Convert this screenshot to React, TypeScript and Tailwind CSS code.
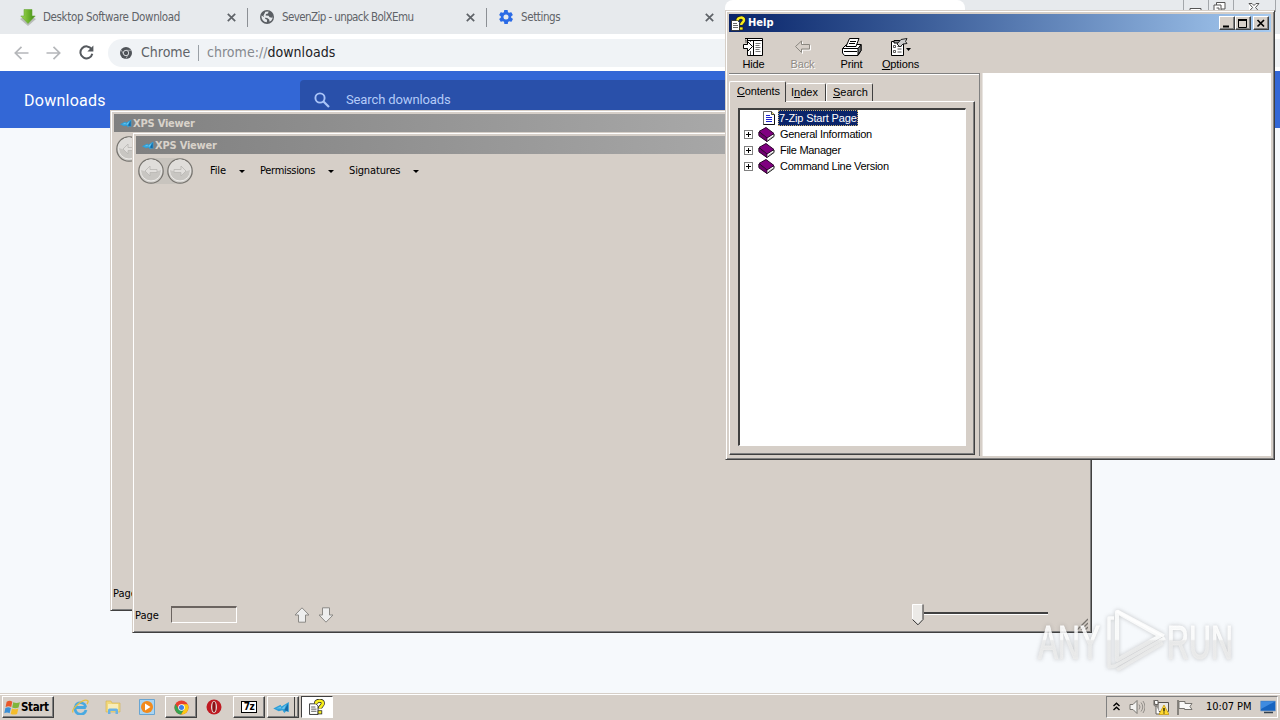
import React from "react";
import clsx from "clsx";

const TAHOMA = "font-['DejaVu_Sans_Condensed','DejaVu_Sans',sans-serif]";
const MS_SANS = "font-['Liberation_Sans',sans-serif]";

const RAISED =
  "border border-t-white border-l-white border-r-[#404040] border-b-[#404040] shadow-[inset_-1px_-1px_0_#808080]";

/* ---------- icons ---------- */

const CloseGlyph = ({ className }: { className?: string }) => (
  <svg viewBox="0 0 9 9" className={clsx("h-[9px] w-[9px] shrink-0", className)}>
    <path d="M.8.8l7.4 7.4M8.2.8L.8 8.2" stroke="#5f6368" strokeWidth="1.7" />
  </svg>
);

const DownloadIcon = () => (
  <svg viewBox="0 0 16 17" className="h-[17px] w-4 shrink-0">
    <defs>
      <linearGradient id="dl" x1="0" y1="0" x2="1" y2="0">
        <stop offset="0" stopColor="#a3d65a" />
        <stop offset="0.5" stopColor="#6fb52c" />
        <stop offset="1" stopColor="#3f8a17" />
      </linearGradient>
    </defs>
    <path d="M0 10l8 7 8-7-2-1H2z" fill="#b9bcb9" />
    <path d="M4 .5h8V7h3.2L8 14.5.8 7H4z" fill="url(#dl)" stroke="#6aa83a" strokeWidth=".6" />
  </svg>
);

const GlobeIcon = () => (
  <svg viewBox="0 0 14 14" className="h-[14px] w-[14px] shrink-0">
    <circle cx="7" cy="7" r="7" fill="#5a5e63" />
    <path
      d="M1.6 5.4l3 2.1.9 1.6 1.6.6-.3 2.6A5.6 5.6 0 011.5 6zM5.4 1.8l3.2-.4-.6 2-2 .6-.4 1.4 3 .3 1 1.6 2.6.5.2-2 .2 2.4-1.2 2.2-1.8 1.4-.4-2.4-2-1.4-2.8-.6-1-1.6z"
      fill="#e7eaed"
    />
  </svg>
);

const GearIcon = () => (
  <svg viewBox="2 2 20 20" className="h-[14px] w-[14px] shrink-0">
    <path
      fill="#2b6be6"
      fillRule="evenodd"
      d="M19.4 13c0-.3.1-.6.1-1s0-.7-.1-1l2.1-1.6c.2-.2.3-.4.1-.7l-2-3.4c-.1-.2-.4-.3-.6-.2l-2.5 1c-.5-.4-1.1-.7-1.7-1l-.4-2.6c0-.3-.2-.5-.5-.5h-4c-.2 0-.5.2-.5.4l-.4 2.7c-.6.2-1.1.6-1.7 1L5 5.1c-.2-.1-.5 0-.6.2l-2 3.4c-.1.3-.1.5.1.7L4.6 11c0 .3-.1.7-.1 1s0 .7.1 1l-2.1 1.6c-.2.2-.3.4-.1.7l2 3.4c.1.2.4.3.6.2l2.5-1c.5.4 1.1.7 1.7 1l.4 2.6c0 .3.3.5.5.5h4c.2 0 .5-.2.5-.4l.4-2.7c.6-.2 1.2-.6 1.7-1l2.5 1c.2.1.5 0 .6-.2l2-3.4c.1-.2.1-.5-.1-.7zM12 15.6a3.6 3.6 0 110-7.2 3.6 3.6 0 010 7.2z"
    />
  </svg>
);

const ArrowGlyph = ({ flip }: { flip?: boolean }) => (
  <svg viewBox="0 0 15 14" className={clsx("h-[14px] w-[15px]", flip && "-scale-x-100")}>
    <path d="M14.5 7H1.5M7.5.8L1.3 7l6.2 6.2" fill="none" stroke="#b5b7ba" strokeWidth="1.7" />
  </svg>
);

const ReloadIcon = () => (
  <svg viewBox="0 0 15 15" className="h-[15px] w-[15px]">
    <path d="M12.6 4.3A6 6 0 1013.3 8.7" fill="none" stroke="#55595e" strokeWidth="2" />
    <path d="M14.4.5v6H8.4z" fill="#55595e" />
  </svg>
);

const ChromeMono = () => (
  <svg viewBox="0 0 12 12" className="h-3 w-3">
    <circle cx="6" cy="6" r="6" fill="#505459" />
    <circle cx="6" cy="6" r="2.7" fill="#505459" stroke="#e4e7ea" strokeWidth=".9" />
    <path d="M6 3.3h5.2M3.7 7.4L1.2 3M8.3 7.4L5.8 11.8" stroke="#c4c7ca" strokeWidth=".7" />
  </svg>
);

const ChromeColor = () => (
  <svg viewBox="0 0 16 16" className="h-[15px] w-[15px]">
    <circle cx="8" cy="8" r="7.5" fill="#e7402f" />
    <path d="M1.5 4.3A7.5 7.5 0 007.6 15.5l3.3-5.700H5.2z" fill="#36a350" />
    <path d="M7.600 15.500A7.500 7.500 0 0014.500 4.500H8l2.900 5.300z" fill="#fbc913" />
    <circle cx="8" cy="8" r="3.5" fill="#fff" />
    <circle cx="8" cy="8" r="2.7" fill="#3f7fe8" />
  </svg>
);

const XpsIcon = ({ className }: { className?: string }) => (
  <svg viewBox="0 0 18 12" className={className}>
    <path d="M0 7l8-4 1 2L17 0v11l-3-1-2 2-2-3-4 1z" fill="#2f9fd8" />
    <path d="M3 7l5-2 1 2 5-4-2 5-3-1z" fill="#6cc6ee" />
    <path d="M12 9l4-7v8z" fill="#146aa8" />
  </svg>
);

const HelpIcon = ({ className }: { className?: string }) => (
  <svg viewBox="0 0 15 15" className={className}>
    <path d="M.5 4.5h6l2 2v8h-8z" fill="#fff" stroke="#222" strokeWidth=".8" />
    <path d="M2 7.500h4M2 9.500h5M2 11.500h5" stroke="#444" strokeWidth=".8" />
    <path d="M6.500 4.500C6.500 1 13 .5 13 4c0 2.500-2.800 2.500-2.800 5" fill="none" stroke="#222" strokeWidth="3.8" />
    <path d="M6.500 4.500C6.500 1 13 .5 13 4c0 2.500-2.800 2.500-2.800 5" fill="none" stroke="#f7ee1c" strokeWidth="2.5" />
    <rect x="8.5" y="11" width="3.500" height="3" fill="#f7ee1c" stroke="#222" strokeWidth=".7" />
  </svg>
);

const HideIcon = () => (
  <svg viewBox="0 0 20 18" className="mr-[1px] h-[18px] w-5">
    <path d="M4.500 .5h15v17h-15z" fill="#fff" stroke="#000" />
    <path d="M2 .5h3M4 2.500h15.500M10.500 2v15" stroke="#000" />
    <path d="M2 2h1v3M7.500 3v1M7.500 13v4" fill="none" stroke="#555" />
    <path d="M12.500 5.500h5M12.500 7.500h4M12.500 9.500h5M12.500 11.500h4M12.500 13.500h5" stroke="#777" />
    <path d="M.5 6.500h4v-3l5 5-5 5v-3h-4z" fill="#fff" stroke="#000" />
  </svg>
);

const BackIcon = () => (
  <svg viewBox="0 0 18 14" className="h-[14px] w-[18px]">
    <path d="M2.500 7.500l6-5.500v3.500h8v4.500h-8v3.500z" fill="none" stroke="#fff" />
    <path d="M1.500 6.500l6-5.500v3.500h8v4.500h-8v3.500z" fill="#d6cfc8" stroke="#8a8780" />
  </svg>
);

const PrintIcon = () => (
  <svg viewBox="0 0 20 18" className="h-[18px] w-5">
    <path d="M.5 10.500l4-4h14.500v6l-3 5H2.500l-2-2.500z" fill="#fff" stroke="#000" />
    <path d="M16 17v-6.500l3-4v6z" fill="#777" stroke="#000" />
    <path d="M4 8.500L7.500.5H17L14 8.500z" fill="#fff" stroke="#000" />
    <path d="M8 3.500h6M7 5.500h6M.5 10.500h15.500M2 13.500h13" stroke="#000" />
  </svg>
);

const OptionsIcon = () => (
  <svg viewBox="0 0 20 18" className="h-[18px] w-5">
    <path d="M.5 3.500h12v14H.5z" fill="#fff" stroke="#000" />
    <path d="M3 2.500h6v2.500H3z" fill="#999" stroke="#000" />
    <path d="M2.500 7.500h2v2h-2zM2.500 12.500h2v2h-2z" fill="#fff" stroke="#333" strokeWidth=".8" />
    <path d="M6.500 8.500h4M6.500 11h4M6.500 14h4" stroke="#555" />
    <path d="M6 6l4-4.500 6-1-1.500 3 1.500 2-4 .5-3 3z" fill="#ccc" stroke="#222" />
    <path d="M15 10h5l-2.500 3z" fill="#000" />
  </svg>
);

const PageIcon = () => (
  <svg viewBox="0 0 12 14" className="h-[14px] w-3 shrink-0">
    <path d="M.5.5h8l3 3v10H.5z" fill="#fff" stroke="#666" />
    <path d="M11.500 3.500v10H.5" fill="none" stroke="#111" />
    <path d="M8.500.5v3h3" fill="#e8e070" stroke="#444" />
    <path d="M3 4.500h4M3 6.500h6M3 8.500h6M3 10.500h6" stroke="#1c23d0" />
  </svg>
);

const BookIcon = () => (
  <svg viewBox="0 0 17 15" className="h-[15px] w-[17px] shrink-0">
    <path d="M1 5v3.500l8 6 7-5V7z" fill="#fff" stroke="#111" />
    <path d="M1 4.500L8 .5l8 6-7 4.500z" fill="#800080" stroke="#2a002a" />
    <path d="M1 5v4l8 5.500V11z" fill="#700070" stroke="#2a002a" strokeWidth=".7" />
    <path d="M10.500 12.500l5-3.300" stroke="#777" strokeWidth=".7" />
  </svg>
);

/* ---------- chrome ---------- */

type TabProps = { icon: React.ReactNode; title: string; className: string; textClass: string };

const BrowserTab = ({ icon, title, className, textClass }: TabProps) => (
  <div className={clsx("flex h-[34px] items-center pr-[11px]", className)}>
    {icon}
    <span className={clsx("mt-[1px] flex-1 whitespace-nowrap text-[#5f6368]", textClass)}>{title}</span>
    <CloseGlyph />
  </div>
);

const Browser = () => (
  <div className="flex h-[693px] w-full flex-col bg-[#f6f9fc]">
    <div className={clsx("flex h-[34px] shrink-0 bg-[#e7eaed] text-[11.5px]", TAHOMA)}>
      <BrowserTab icon={<DownloadIcon />} title="Desktop Software Download" className="w-[247px] pl-5" textClass="ml-[7px] tracking-[-0.37px]" />
      <div className="mt-2 h-[19px] w-px bg-[#8c9095]" />
      <BrowserTab icon={<GlobeIcon />} title="SevenZip - unpack BolXEmu" className="w-[238px] pl-3" textClass="ml-2 tracking-[-0.6px]" />
      <div className="mt-2 h-[19px] w-px bg-[#8c9095]" />
      <BrowserTab icon={<GearIcon />} title="Settings" className="w-[238px] pl-3" textClass="ml-2 tracking-[-0.4px]" />
      <div className="h-[34px] w-[240px] rounded-t-lg bg-white" />
      <div className="flex flex-1 justify-end">
        <svg viewBox="0 0 98 12" className="h-3 w-[98px]">
          <path d="M1.500 0v12M26.500 0v12M51.500 0v12M93.500 0v12" stroke="#a3a7ab" />
          <path d="M8 12V8.500h11V12M32 12V5h7v7M34.500 5V2.500H43V9H39M34.500 8h2.500v3" fill="#fff" stroke="#555" />
          <path d="M67 3.500h3l2 2 2-2h3l-3.500 4 3.500 4M67 3.500l3.500 4-3.500 4" fill="#fff" stroke="#555" />
        </svg>
      </div>
    </div>
    <div className="flex h-[37px] shrink-0 items-center bg-white pl-[14px]">
      <ArrowGlyph />
      <div className="ml-[17px]">
        <ArrowGlyph flip />
      </div>
      <div className="ml-[18px]">
        <ReloadIcon />
      </div>
      <div className={clsx("ml-[14px] flex h-7 flex-1 items-center rounded-l-full bg-[#f0f3f6] pl-3 text-[14px] text-[#5f6368]", TAHOMA)}>
        <ChromeMono />
        <span className="ml-[9px] w-[49px] whitespace-nowrap">Chrome</span>
        <div className="ml-2 h-4 w-px bg-[#9aa0a6]" />
        <span className="ml-2 whitespace-nowrap tracking-[0.03px] text-[#85898e]">
          chrome://<span className="text-[#202124]">downloads</span>
        </span>
      </div>
    </div>
    <div className="flex h-[57px] shrink-0 items-start bg-[#3367d6] font-['Roboto',sans-serif]">
      <span className="mt-[18px] w-[276px] pl-6 text-[16px] leading-6 tracking-[0.25px] text-white">Downloads</span>
      <div className="ml-[24px] mt-[9px] flex h-10 w-[680px] items-center rounded-sm bg-[#2950aa] pl-[14px]">
        <svg viewBox="0 0 16 16" className="h-4 w-4">
          <circle cx="6" cy="6" r="4.6" fill="none" stroke="#a9c4f8" strokeWidth="1.9" />
          <path d="M9.500 9.500l5.500 5.500" stroke="#a9c4f8" strokeWidth="2.2" />
        </svg>
        <span className="ml-4 text-[13px] tracking-[-0.12px] text-[#b4cbf8]">Search downloads</span>
      </div>
    </div>
  </div>
);

/* ---------- XPS Viewer ---------- */

const NavCircle = ({ flip }: { flip?: boolean }) => (
  <svg viewBox="0 0 26 26" className={clsx("h-[26px] w-[26px] shrink-0", flip && "-scale-x-100")}>
    <circle cx="13" cy="13" r="12.2" fill="#d2d0cc" stroke="#77746f" strokeWidth="1.2" />
    <circle cx="13" cy="12.5" r="10.500" fill="#c8c6c2" stroke="#edebe8" />
    <path d="M2.500 12a10.500 10.500 0 0121 0q-10 4-21 0z" fill="#dfddda" />
    <path d="M7 13l5-5v3.500h7v3h-7V18z" fill="#e1dfdc" stroke="#b8b6b2" strokeWidth=".8" />
  </svg>
);

const menus = [
  { label: "File", width: "w-[29px]", tracking: "tracking-[-0.15px]" },
  { label: "Permissions", width: "w-[68px]", tracking: "tracking-[-0.3px]" },
  { label: "Signatures", width: "w-[64px]", tracking: "tracking-[-0.15px]" },
];

const PageArrow = ({ down }: { down?: boolean }) => (
  <svg viewBox="0 0 16 16" className={clsx("h-4 w-4", down && "rotate-180")}>
    <path d="M8 .8l7 7.200h-3.500v7.200h-7V8H1z" fill="#eeeeee" stroke="#8b8985" />
  </svg>
);

const XpsViewer = ({ className }: { className: string }) => (
  <div
    className={clsx(
      "absolute flex h-[501px] w-[960px] flex-col border border-[#d6cfc8] border-r-[#404040] border-b-[#404040] bg-[#d6cfc8] p-[3px] pl-0 pt-0 text-[11px] text-black",
      "shadow-[inset_1px_1px_0_#fff,inset_-1px_-1px_0_#808080]",
      TAHOMA,
      className
    )}
  >
    <div className="ml-[3px] mt-[3px] flex h-[18px] shrink-0 items-center bg-linear-to-r from-[#808080] to-[#c0c0c0] pl-[6px]">
      <XpsIcon className="h-[9px] w-3" />
      <span className="ml-[1px] mt-[2px] text-[11px] font-bold tracking-[-0.2px] text-[#d8d2ca]">XPS Viewer</span>
    </div>
    <div className="mt-[1px] flex h-8 shrink-0 items-center pl-[5px]">
      <div className="flex gap-[3px] rounded-full bg-[#c8c4be]">
        <NavCircle />
        <NavCircle flip />
      </div>
      <div className="ml-[17px] flex gap-[15px]">
        {menus.map((menu) => (
          <div key={menu.label} className="flex items-center">
            <span className={clsx("whitespace-nowrap", menu.tracking, menu.width)}>{menu.label}</span>
            <svg viewBox="0 0 6 3" className="h-[3px] w-[6px]">
              <path d="M0 0h6L3 3z" />
            </svg>
          </div>
        ))}
      </div>
    </div>
    <div className="flex-1" />
    <div className="flex h-7 shrink-0 items-center pl-[2px]">
      <span className="mt-[2px] w-9">Page</span>
      <div className="mb-[1px] h-[17px] w-[66px] border border-t-2 border-[#6b6460] border-r-white border-b-white" />
      <div className="mb-[1px] ml-[57px] flex gap-2">
        <PageArrow />
        <PageArrow down />
      </div>
      <div className="ml-auto flex items-center">
        <svg viewBox="0 0 12 22" className="h-[22px] w-3">
          <path d="M.5.5h10.500v15L6 21 .5 15.500z" fill="#eceae7" />
          <path d="M.5 15.500V.5h10" fill="none" stroke="#fff" />
          <path d="M11 .5v15L6 20.800.5 15.500" fill="none" stroke="#333" />
        </svg>
        <div className="mb-[3px] h-[3px] w-[124px] border-b border-b-white bg-[#404040]" />
      </div>
      <svg viewBox="0 0 12 12" className="ml-[28px] mt-[18px] h-3 w-3">
        <path d="M1 12L12 1M5 12l7-7M9 12l3-3" stroke="#77736e" strokeWidth="1.3" />
      </svg>
    </div>
  </div>
);

/* ---------- Help ---------- */

const CaptionButton = ({ children, className }: { children: React.ReactNode; className?: string }) => (
  <div className={clsx("flex h-[14px] w-4 items-center justify-center bg-[#d6cfc8]", RAISED, className)}>
    <svg viewBox="0 0 10 9" className="h-[9px] w-[10px]">
      {children}
    </svg>
  </div>
);

const toolButtons = [
  { key: "", label: "Hide", icon: <HideIcon /> },
  { key: "", label: "Back", icon: <BackIcon />, disabled: true },
  { key: "", label: "Print", icon: <PrintIcon /> },
  { key: "O", label: "ptions", icon: <OptionsIcon /> },
];

const topics = ["General Information", "File Manager", "Command Line Version"];

const HelpWindow = () => (
  <div
    className={clsx(
      "absolute left-[725px] top-[10px] flex h-[450px] w-[550px] flex-col border border-[#d6cfc8] border-r-[#404040] border-b-[#404040] bg-[#d6cfc8] p-[3px] text-[11px] text-black shadow-[inset_1px_1px_0_#fff,inset_-1px_-1px_0_#808080]",
      MS_SANS
    )}
  >
    <div className="flex h-[18px] shrink-0 items-center bg-linear-to-r from-[#0a246a] to-[#a6caf0] pl-[2px] pr-[2px]">
      <HelpIcon className="h-[15px] w-[15px]" />
      <span className={clsx("ml-[2px] mt-[1px] flex-1 font-bold text-white", TAHOMA)}>Help</span>
      <CaptionButton>
        <path d="M1 7.500h6" stroke="#000" strokeWidth="2" />
      </CaptionButton>
      <CaptionButton>
        <path d="M.5 0v8.500h8V0" fill="none" stroke="#000" />
        <path d="M0 1h9" stroke="#000" strokeWidth="2" />
      </CaptionButton>
      <CaptionButton className="ml-[2px]">
        <path d="M1.500 1l6.500 6.500M8 1L1.500 7.500" stroke="#000" strokeWidth="1.7" />
      </CaptionButton>
    </div>
    <div className="flex h-[41px] shrink-0">
      {toolButtons.map((tool) => (
        <div
          key={tool.label}
          className={clsx("flex w-[49px] flex-col items-center pt-[5px]", tool.disabled && "text-[#8f8b85] [text-shadow:1px_1px_0_#fff]")}
        >
          <div className="flex h-5 items-center">{tool.icon}</div>
          <span className="leading-[14px] tracking-[-0.1px]">
            {tool.key && <u>{tool.key}</u>}
            {tool.label}
          </span>
        </div>
      ))}
    </div>
    <div className="flex min-h-0 flex-1">
      <div className="flex w-[250px] flex-col border-t border-t-[#808080] pb-[1px] pr-1 shadow-[inset_0_1px_0_#fff]">
        <div className="mt-[7px] flex h-5 items-end">
          <div className="relative z-10 mb-[-1px] flex h-[21px] w-[57px] items-start rounded-t-[2px] border border-b-0 border-white border-r-[#404040] bg-[#d6cfc8] pl-[7px] pt-[3px] leading-[13px]">
            <span className="tracking-[-0.15px]"><u>C</u>ontents</span>
          </div>
          <div className="flex h-[18px] w-[40px] items-center rounded-t-[2px] border border-b-0 border-l-0 border-white border-r-[#404040] pl-[5px]">
            <span><u className="no-underline">I</u><u>n</u>dex</span>
          </div>
          <div className="flex h-[18px] w-[47px] items-center rounded-t-[2px] border border-b-0 border-white border-r-[#404040] pl-[6px]">
            <span><u>S</u>earch</span>
          </div>
        </div>
        <div className="flex flex-1 border border-white border-r-[#404040] border-b-[#404040] px-2 pb-2 pt-[6px] shadow-[inset_-1px_-1px_0_#808080]">
          <div className="flex flex-1 flex-col border border-t-2 border-l-2 border-t-[#404040] border-l-[#404040] border-r-white border-b-white bg-white">
            <div className="flex h-4 items-center pl-[23px]">
              <PageIcon />
              <span className="ml-[3px] h-4 whitespace-nowrap border border-dotted border-[#c8b070] bg-[#0a246a] leading-[14px] tracking-[-0.15px] text-white">7-Zip Start Page</span>
            </div>
            {topics.map((topic) => (
              <div key={topic} className="flex h-4 items-center pl-1">
                <svg viewBox="0 0 9 9" className="h-[9px] w-[9px]" shapeRendering="crispEdges">
                  <path d="M.5.5h8v8h-8z" fill="#fff" stroke="#808080" />
                  <path d="M2 4.500h5M4.500 2v5" stroke="#000" />
                </svg>
                <div className="ml-[5px]">
                  <BookIcon />
                </div>
                <span className="ml-[5px] whitespace-nowrap tracking-[-0.28px]">{topic}</span>
              </div>
            ))}
          </div>
        </div>
      </div>
      <div className="w-1 border-x border-l-[#808080] border-r-[#e8e4e0]" />
      <div className="flex-1 bg-white" />
    </div>
  </div>
);

/* ---------- taskbar ---------- */

const TaskButton = ({ children, className }: { children: React.ReactNode; className?: string }) => (
  <div className={clsx("flex h-[22px] w-8 items-center justify-center", className)}>{children}</div>
);

const Taskbar = () => (
  <div className={clsx("flex h-[27px] w-full items-center border-t border-[#d6cfc8] bg-[#d6cfc8] pl-[2px] pr-[2px] shadow-[inset_0_1px_0_#fff]", TAHOMA)}>
    <div className={clsx("flex h-[22px] w-[52px] items-center pl-[1px]", RAISED)}>
      <svg viewBox="0 0 16 14" className="h-[15px] w-[17px] shrink-0">
        <path d="M2.500 1.500q3-1.500 5.300 0L6.800 6.500q-2.500-1.300-5.300 0z" fill="#e8572a" />
        <path d="M8.700 2q3 1.300 6.300 0l-1.300 5q-3 1.200-6 0z" fill="#7fb53a" />
        <path d="M1.300 7.400q2.800-1.200 5.200 0l-1.200 5q-2.400-1.200-5 0z" fill="#3b8fd6" />
        <path d="M7.500 8q3 1.200 6 0l-1.200 5q-3 1.200-6 0z" fill="#f5bd2c" />
      </svg>
      <span className="mt-[1px] text-[11.5px] font-bold tracking-[-0.35px]">Start</span>
    </div>
    <TaskButton className="ml-[10px]">
      <svg viewBox="0 0 17 16" className="h-4 w-[17px]">
        <path d="M14 11A5.500 5.500 0 113.200 8.500h10.600" fill="none" stroke="#4aa9e0" strokeWidth="2.8" />
        <path d="M13.700 8.500A5.400 5.400 0 003.400 7" fill="none" stroke="#4aa9e0" strokeWidth="2.6" />
        <path d="M1 13.500C-1 10 12-2 16 2q.5 1-1 3" fill="none" stroke="#e6c042" strokeWidth="1.3" />
      </svg>
    </TaskButton>
    <TaskButton className="ml-[1px]">
      <svg viewBox="0 0 16 16" className="h-4 w-4">
        <path d="M1 2h5l1 2h8v9H1z" fill="#f1d87c" stroke="#d4b24c" strokeWidth=".6" />
        <path d="M3 5h10v6H3z" fill="#f8edb8" />
        <path d="M3 15v-4q0-1.500 1.500-1.500h7Q13 9.500 13 11v4h-2.500v-3h-5v3z" fill="#6ab2e4" />
      </svg>
    </TaskButton>
    <TaskButton className="ml-[2px]">
      <svg viewBox="0 0 16 16" className="h-4 w-4">
        <path d="M.5.5h15v15H.5z" fill="#a9d4f2" stroke="#69a5d2" />
        <circle cx="8" cy="8" r="6" fill="#f28a1c" />
        <path d="M6 4.500l5.500 3.500L6 11.500z" fill="#fff" />
      </svg>
    </TaskButton>
    <TaskButton className={clsx("ml-[2px]", RAISED)}>
      <ChromeColor />
    </TaskButton>
    <TaskButton className="ml-[1px]">
      <svg viewBox="0 0 16 16" className="h-4 w-4">
        <circle cx="8" cy="8" r="7.5" fill="#bf1a22" />
        <ellipse cx="8" cy="8" rx="3" ry="6" fill="#e4dcd8" />
        <ellipse cx="8" cy="8" rx="1.7" ry="5.2" fill="#8c1015" />
      </svg>
    </TaskButton>
    <TaskButton className={clsx("ml-[3px]", RAISED)}>
      <div className="flex h-3 w-4 items-center justify-center border border-black bg-white text-[10px] font-bold leading-none tracking-[-0.5px]">7z</div>
    </TaskButton>
    <div className={clsx("ml-[2px] h-[22px] w-8 pr-[3px]", RAISED)}>
      <div className="flex h-full w-full items-center justify-center border-r border-r-[#404040]">
        <XpsIcon className="h-[11px] w-[17px]" />
      </div>
    </div>
    <TaskButton className="ml-[2px] border border-t-[#404040] border-l-[#404040] border-r-white border-b-white bg-white">
      <HelpIcon className="h-4 w-4" />
    </TaskButton>
    <div className="ml-auto flex h-[22px] w-[172px] items-center border border-t-[#808080] border-l-[#808080] border-r-white border-b-white pl-[6px] text-[11px]">
      <svg viewBox="0 0 7 9" className="mb-[2px] h-[9px] w-[7px]">
        <path d="M.5 4L3.500 1.200 6.500 4M.5 8l3-2.800 3 2.800" fill="none" stroke="#000" strokeWidth="1.4" />
      </svg>
      <svg viewBox="0 0 16 16" className="ml-[9px] h-4 w-4">
        <path d="M1 5.500h3l4-4v13l-4-4H1z" fill="#f4f3f1" stroke="#77746f" />
        <path d="M10 5.500q2 2.500 0 5M12 3.500q3.500 4.500 0 9M14 2q4 6 0 12" fill="none" stroke="#8a8782" strokeWidth=".9" />
      </svg>
      <svg viewBox="0 0 16 16" className="ml-2 h-4 w-4">
        <path d="M5 3.500h10.500v9H5z" fill="#e9e7e4" stroke="#55524e" />
        <path d="M1 1v5q0 1 1.500 1H4M1.500 1.500h3.500v4H1.500zM3 6v9h4" fill="#fff" stroke="#66635f" />
        <path d="M11 6l5 9.500H6z" fill="#ffd92e" stroke="#c79b12" strokeWidth=".8" />
        <path d="M11 9v3.500M11 13.500v1" stroke="#000" strokeWidth="1.2" />
      </svg>
      <svg viewBox="0 0 16 16" className="ml-2 h-4 w-4">
        <path d="M1 1v15" stroke="#66635f" strokeWidth="1.4" />
        <path d="M2 2.500h6v2h7l-2 3 2 3H7.500v-1H2z" fill="#faf9f8" stroke="#77746f" />
      </svg>
      <span className="ml-[13px] mt-[1px] w-[46px] whitespace-nowrap tracking-[-0.1px]">10:07 PM</span>
      <svg viewBox="0 0 16 14" className="ml-[8px] h-[14px] w-4">
        <path d="M.5 1h15v10H.5z" fill="#1764c0" stroke="#8aa5c4" strokeWidth=".7" />
        <path d="M1 1.500h14L1 9z" fill="#3f8be0" />
        <path d="M4 12.500h9" stroke="#33414f" strokeWidth="1.5" />
      </svg>
    </div>
  </div>
);

const Watermark = () => (
  <svg viewBox="0 0 216 80" className="absolute left-[1034px] top-[600px] h-20 w-[216px] drop-shadow-[0_0_2px_rgba(110,110,110,0.4)]">
    <defs>
      <linearGradient id="wm" x1="0" y1="0" x2="0" y2="80" gradientUnits="userSpaceOnUse">
        <stop offset="0.49" stopColor="#fff" stopOpacity="0.85" />
        <stop offset="0.51" stopColor="#ececec" stopOpacity="0.85" />
      </linearGradient>
    </defs>
    <g fill="url(#wm)" stroke="url(#wm)" strokeWidth="1" fontSize="49" className="font-['Liberation_Sans',sans-serif]">
      <text x="4" y="59" textLength="62" lengthAdjust="spacingAndGlyphs">ANY</text>
      <text x="133" y="59" textLength="66" lengthAdjust="spacingAndGlyphs">RUN</text>
    </g>
    <g fill="none" stroke="url(#wm)" strokeWidth="4" strokeLinejoin="round">
      <path d="M83 12v48l43-24z" />
      <path d="M80 18h-5v49l6-1 50-28" strokeWidth="3.5" />
      <path d="M83 11l47 25M83 70l46-27" strokeWidth="3.5" />
    </g>
  </svg>
);

const App: React.FC = () => {
  return (
    <div className="relative flex h-[720px] w-[1280px] flex-col overflow-hidden">
      <Browser />
      <Taskbar />
      <XpsViewer className="left-[110px] top-[110px]" />
      <XpsViewer className="left-[132px] top-[132px]" />
      <Watermark />
      <HelpWindow />
    </div>
  );
};

export default App;
